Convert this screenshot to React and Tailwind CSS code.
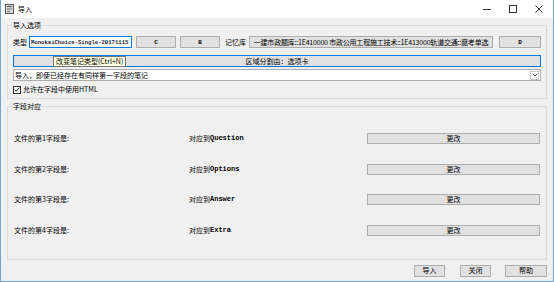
import React from 'react'

const btn = 'bg-[#e1e1e1] border border-[#adadad] flex items-center justify-center'

function AppIcon() {
  return (
    <svg width="9" height="10" viewBox="0 0 9 10" className="shrink-0">
      <rect x="0.5" y="0.5" width="8" height="9" fill="#d8d8d8" stroke="#555" />
      <rect x="2" y="2" width="5" height="1" fill="#555" />
      <rect x="2" y="4.5" width="5" height="1" fill="#777" />
      <rect x="2" y="7" width="3" height="1" fill="#777" />
    </svg>
  )
}

function FieldRow({ n, target }) {
  return (
    <div className="flex items-center h-[11px]">
      <div className="w-[176px] pl-[1px]">文件的第{n}字段是:</div>
      <div className="flex-1 flex items-center">
        对应到<span className="font-['Liberation_Mono',monospace] font-bold text-[7px]">{target}</span>
      </div>
      <div className={`${btn} w-[173px] h-[11px] mr-[1px]`}>更改</div>
    </div>
  )
}

export default function App() {
  return (
    <div className="w-[554px] h-[282px] flex flex-col bg-[#f0f0f0] border-x border-b border-[#6fa6d6] overflow-hidden text-[7px] leading-[9px] text-black font-['Noto_Sans_CJK_SC',sans-serif]">
      {/* title bar */}
      <div className="h-[18px] bg-white flex items-center shrink-0">
        <div className="ml-[4px]"><AppIcon /></div>
        <span className="ml-[4px]">导入</span>
        <div className="ml-auto flex items-center h-full">
          <div className="w-[26px] h-full flex items-center justify-center">
            <div className="w-[8px] h-px bg-[#333]" />
          </div>
          <div className="w-[26px] h-full flex items-center justify-center">
            <div className="w-[8px] h-[8px] border border-[#333]" />
          </div>
          <div className="w-[26px] h-full flex items-center justify-center mr-[1px]">
            <svg width="8" height="8" viewBox="0 0 8 8">
              <path d="M0.5 0.5 L7.5 7.5 M7.5 0.5 L0.5 7.5" stroke="#333" strokeWidth="1" />
            </svg>
          </div>
        </div>
      </div>

      {/* import options */}
      <fieldset className="mx-[6px] mt-[3px] border border-[#dcdcdc] px-[5px] pb-[4px]">
        <legend className="px-0 leading-[9px]">导入选项</legend>
        <div className="flex items-stretch h-[12px] mt-[6px]">
          <div className="w-[16px] flex items-center">类型</div>
          <div className="w-[103px] bg-white border border-[#0078d7] flex items-center pl-px overflow-hidden whitespace-nowrap font-['Liberation_Mono',monospace] font-bold text-[5.6px] text-[#1a1a40]">
            MonokaiChoice-Single-20171115
          </div>
          <div className={`${btn} w-[40px] ml-[4px] font-['Liberation_Mono',monospace] font-bold text-[6px]`}>C</div>
          <div className={`${btn} w-[40px] ml-[4px] font-['Liberation_Mono',monospace] font-bold text-[6px]`}>B</div>
          <div className="ml-[5px] w-[22px] flex items-center whitespace-nowrap">记忆库</div>
          <div className={`${btn} flex-1 ml-[2px] whitespace-nowrap overflow-hidden tracking-[-0.2px]`}>
            一建市政题库::1E410000 市政公用工程施工技术::1E413000轨道交通::魔考单选
          </div>
          <div className={`${btn} w-[42px] ml-[6px] font-['Liberation_Mono',monospace] font-bold text-[6px]`}>D</div>
        </div>
        <div className="relative mt-[7px] h-[12px]">
          <div className="h-full bg-[#e1e1e1] border border-[#0078d7] flex items-center justify-center">区域分割由：选项卡</div>
          <div className="absolute left-[40px] top-[1px] h-[11px] px-[2px] bg-[#ffffe1] border border-[#767676] flex items-center whitespace-nowrap">
            改变笔记类型(Ctrl+N)
          </div>
        </div>
        <div className="mt-[2px] h-[12px] bg-white border border-[#adadad] flex items-center">
          <span className="flex-1 pl-[1px]">导入，即使已经存在有同样第一字段的笔记</span>
          <div className="w-[9px] h-[9px] mr-[1px] border border-[#c8c8c8] flex items-center justify-center">
            <svg width="6" height="4" viewBox="0 0 6 4">
              <path d="M0.5 0.5 L3 3 L5.5 0.5" stroke="#555" fill="none" strokeWidth="1" />
            </svg>
          </div>
        </div>
        <div className="mt-[4px] h-[9px] flex items-center">
          <div className="w-[8px] h-[8px] bg-white border border-[#333] flex items-center justify-center">
            <svg width="6" height="5" viewBox="0 0 6 5">
              <path d="M0.5 2.5 L2.2 4.2 L5.5 0.6" stroke="#222" fill="none" strokeWidth="1" />
            </svg>
          </div>
          <span className="ml-[2px]">允许在字段中使用HTML</span>
        </div>
      </fieldset>

      {/* field mapping */}
      <fieldset className="mx-[6px] mt-[3px] border border-[#dcdcdc] px-[5px] pb-[23px]">
        <legend className="px-0 leading-[9px]">字段对应</legend>
        <div className="mt-[22px] flex flex-col gap-[19.5px]">
          <FieldRow n="1" target="Question" />
          <FieldRow n="2" target="Options" />
          <FieldRow n="3" target="Answer" />
          <FieldRow n="4" target="Extra" />
        </div>
      </fieldset>

      {/* dialog buttons */}
      <div className="mt-[5px] mr-[6px] flex justify-end">
        <div className={`${btn} w-[31px] h-[12px]`}>导入</div>
        <div className={`${btn} w-[31px] h-[12px] ml-[15px]`}>关闭</div>
        <div className={`${btn} w-[42px] h-[12px] ml-[14px]`}>帮助</div>
      </div>
    </div>
  )
}
